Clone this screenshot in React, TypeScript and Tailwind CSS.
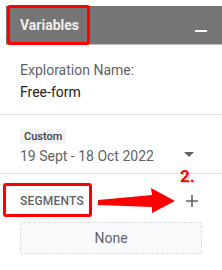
export default function App() {
  return (
    <div className="relative w-[222px] h-[270px] overflow-hidden bg-white font-['Roboto',sans-serif]">
      {/* Header */}
      <div className="ml-[6px] mt-[6px] flex h-[39px] items-center justify-between border-b border-[#bdbdbd] bg-[#757575] pl-[14px] pr-[15px]">
        <span className="text-[14px] font-bold leading-none text-[#eeeeee]">Variables</span>
        <div className="mt-[12px] h-[2px] w-[12px] bg-white" />
      </div>

      {/* Exploration name */}
      <div className="px-[20px] pb-[11px] pt-[14px]">
        <div className="text-[14px] leading-[22px] text-[#5f6368]">Exploration Name:</div>
        <div className="text-[14px] leading-[22px] text-[#202124]">Free-form</div>
      </div>
      <div className="border-t border-[#e0e0e0]" />

      {/* Date range */}
      <div className="flex items-end justify-between px-[20px] pb-[7px] pt-[14px]">
        <div className="flex flex-col items-start">
          <span className="bg-[#f1f3f4] px-[4px] text-[11px] font-medium leading-[15px] text-[#3c4043]">Custom</span>
          <span className="mt-[2px] text-[14px] leading-[20px] text-[#5f6368]">19 Sept - 18 Oct 2022</span>
        </div>
        <svg width="10" height="5" viewBox="0 0 10 5" className="mb-[9px] mr-[8px]">
          <path d="M0 0h10L5 5z" fill="#5f6368" />
        </svg>
      </div>
      <div className="border-t border-[#e0e0e0]" />

      {/* Segments */}
      <div className="flex items-center justify-between pl-[20px] pr-[23px] pt-[19px]">
        <span className="text-[12px] font-medium leading-[16px] tracking-[0.2px] text-[#5f6368]">SEGMENTS</span>
        <svg width="14" height="14" viewBox="0 0 14 14">
          <path d="M7 1v12M1 7h12" stroke="#5f6368" strokeWidth="1.6" />
        </svg>
      </div>
      <div className="mx-[20px] mt-[13px] flex h-[32px] items-center justify-center rounded-[3px] border border-dashed border-[#dadce0] bg-[#f8f9fa] text-[14px] text-[#5f6368]">
        None
      </div>

      {/* Annotations */}
      <div className="absolute left-[7px] top-[5px] h-[40px] w-[83px] rounded-[3px] border-[3px] border-[#ff0000]" />
      <div className="absolute left-[3px] top-[183px] h-[34px] w-[89px] rounded-[3px] border-[3px] border-[#ff0000]" />
      <svg className="absolute left-0 top-0" width="222" height="270" viewBox="0 0 222 270">
        <polygon points="98,200 152,195 151,188 175,201 152,213 152,207 98,205" fill="#ff0000" />
      </svg>
      <span className="absolute left-[180px] top-[166px] text-[17px] font-bold leading-[20px] text-[#ff0000] [text-shadow:0_0_2px_#fff,0_0_2px_#fff,1px_1px_1px_#999]">
        2.
      </span>
    </div>
  );
}
